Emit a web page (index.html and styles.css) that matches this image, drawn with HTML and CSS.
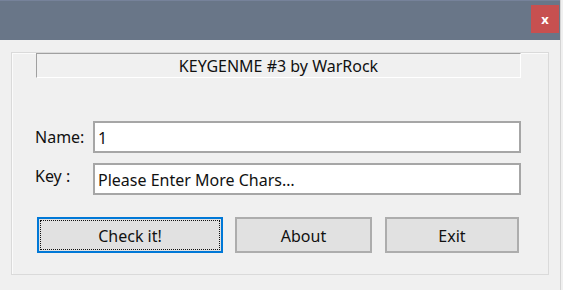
FILE: index.html
```html
<!DOCTYPE html>
<html>
<head>
<meta charset="utf-8">
<link rel="stylesheet" href="styles.css">
</head>
<body>
<div class="window">
  <div class="titlebar">
    <div class="close">x</div>
  </div>
  <div class="client">
    <div class="panel">
      <div class="banner">KEYGENME #3 by WarRock</div>
      <div class="form">
        <div class="row">
          <span class="lbl">Name:</span>
          <div class="field">1</div>
        </div>
        <div class="row">
          <span class="lbl lbl-key">Key :</span>
          <div class="field">Please Enter More Chars…</div>
        </div>
      </div>
      <div class="buttons">
        <div class="btn btn-check"><span class="focus">Check it!</span></div>
        <div class="btn btn-about">About</div>
        <div class="btn btn-exit">Exit</div>
      </div>
    </div>
  </div>
</div>
</body>
</html>
```

FILE: styles.css
```css
html, body {
  margin: 0;
  padding: 0;
}
body {
  width: 563px;
  height: 290px;
  background: #f0f0f0;
  font-family: "Noto Sans", "Open Sans", sans-serif;
  font-size: 16px;
  color: #111;
  overflow: hidden;
}
.window {
  width: 560px;
  height: 290px;
  border-right: 1px solid #d4d4d4;
  background: #f0f0f0;
  display: flex;
  flex-direction: column;
}
.titlebar {
  height: 40px;
  background: #697688;
  display: flex;
  justify-content: flex-end;
  align-items: flex-start;
  padding-right: 1px;
  box-sizing: border-box;
  border-top: 1px solid #76829a;
}
.close {
  margin-top: 4px;
  width: 28px;
  height: 28px;
  background: #c75050;
  color: #fff;
  font-weight: bold;
  font-size: 13px;
  display: flex;
  align-items: center;
  justify-content: center;
  line-height: 1;
}
.client {
  padding: 12px 0 0 11px;
}
.panel {
  width: 538px;
  height: 223px;
  box-sizing: border-box;
  border: 1px solid #dadada;
  box-shadow: inset 1px 1px 0 #fbfbfb;
}
.banner {
  margin-left: 24px;
  width: 485px;
  height: 25px;
  box-sizing: border-box;
  border-top: 1px solid #a0a0a0;
  border-left: 1px solid #a0a0a0;
  border-right: 1px solid #ffffff;
  border-bottom: 1px solid #ffffff;
  display: flex;
  align-items: center;
  justify-content: center;
}
.form {
  margin-top: 43px;
  display: flex;
  flex-direction: column;
  gap: 10px;
}
.row {
  display: flex;
  align-items: center;
  height: 32px;
}
.lbl {
  width: 58px;
  padding-left: 23px;
  flex: none;
}
.lbl-key {
  margin-top: -6px;
}
.field {
  width: 428px;
  height: 32px;
  flex: none;
  box-sizing: border-box;
  background: #fff;
  border: 2px solid #a6a6a6;
  padding-left: 3px;
  padding-top: 1px;
  display: flex;
  align-items: center;
}
.buttons {
  margin-top: 22px;
  margin-left: 25px;
  display: flex;
}
.btn {
  height: 36px;
  flex: none;
  box-sizing: border-box;
  background: #e1e1e1;
  border: 2px solid #adadad;
  padding-top: 2px;
  display: flex;
  align-items: center;
  justify-content: center;
}
.btn-check {
  width: 186px;
  border-color: #0078d7;
  padding: 1px;
}
.focus {
  flex: 1;
  align-self: stretch;
  border: 1px dotted #111;
  padding-top: 2px;
  display: flex;
  align-items: center;
  justify-content: center;
}
.btn-about {
  width: 137px;
  margin-left: 12px;
}
.btn-exit {
  width: 134px;
  margin-left: 13px;
}
```
